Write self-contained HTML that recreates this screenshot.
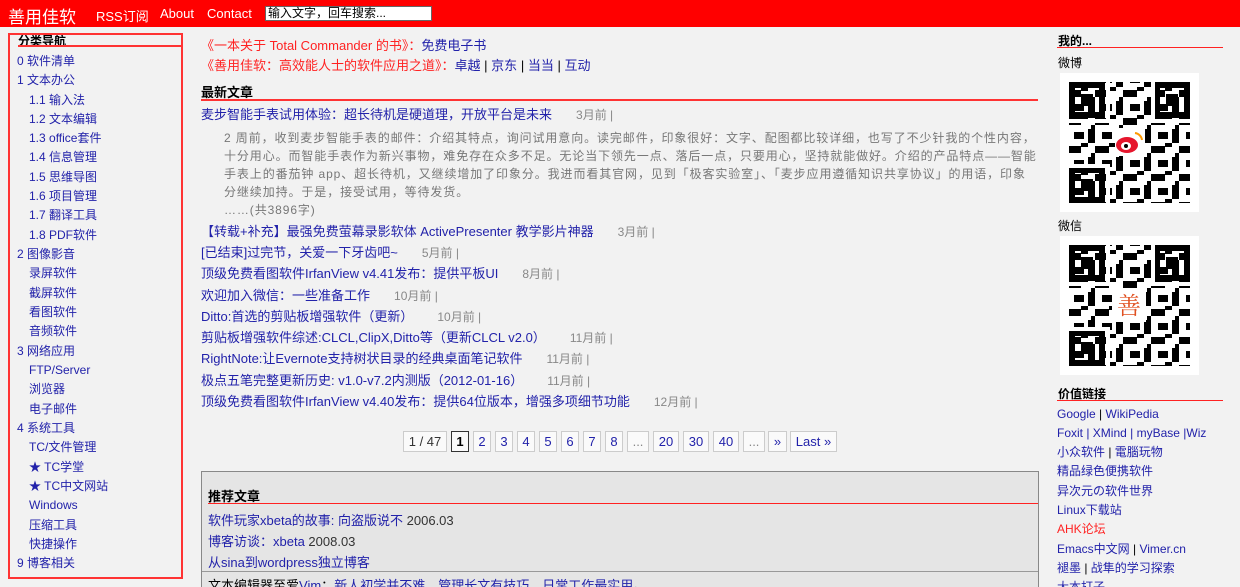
<!DOCTYPE html>
<html style="overflow:hidden;height:587px"><head><meta charset="utf-8"><style>
*{margin:0;padding:0;box-sizing:border-box}
html,body{overflow:hidden}
body{width:1240px;height:587px;background:#f2f2f2;font-family:"Liberation Sans","Noto Sans CJK SC",sans-serif;font-size:12px;color:#333;position:relative}
a{color:#2222aa;text-decoration:none}
.abs{position:absolute;white-space:nowrap}
#hd{position:absolute;left:0;top:0;width:1240px;height:27px;background:#ff0000}
#hd .abs{color:#fff;font-size:13px;top:6px}
#nav{position:absolute;left:8px;top:33px;width:175px;height:546px;border:2px solid #ff3333}
.nt{font-weight:bold;font-size:12px;color:#000;line-height:12px;position:absolute;left:8px;top:0;width:164px;border-bottom:2px solid #ff3333;height:12px;overflow:hidden}
.ni{position:absolute;font-size:12px;line-height:14px;color:#2222aa}
.h{font-weight:bold;font-size:13px;color:#000}
.date{color:#888;font-size:12px}
.pg{position:absolute;top:431px;height:21px;border:1px solid #ccc;background:#fafafa;font-size:13px;line-height:19px;text-align:center;color:#2222aa}
.ex{position:absolute;left:224px;color:#777;font-size:12px;letter-spacing:0.9px;line-height:18px;width:820px}
.art{position:absolute;left:201px;font-size:13px;line-height:16px;white-space:nowrap}
.art .date{margin-left:24px}
.rl{position:absolute;left:1057px;font-size:12px;line-height:14px;white-space:nowrap;color:#2222aa}
.sep{color:#000}
</style></head><body>
<div id="hd">
<div class="abs" style="left:8px;top:3px;font-size:17px">善用佳软</div>
<div class="abs" style="left:96px">RSS订阅</div>
<div class="abs" style="left:160px">About</div>
<div class="abs" style="left:207px">Contact</div>
<div class="abs" style="left:265px;top:6px;width:167px;height:15px;background:#fff;border:1px solid #666;color:#000;font-size:12px;line-height:13px;padding-left:2px">输入文字，回车搜索...</div>
</div>

<div id="nav">
<div class="nt">分类导航</div>
</div>
<div class="ni" style="left:17px;top:54px">0 软件清单</div>
<div class="ni" style="left:17px;top:73px">1 文本办公</div>
<div class="ni" style="left:29px;top:93px">1.1 输入法</div>
<div class="ni" style="left:29px;top:112px">1.2 文本编辑</div>
<div class="ni" style="left:29px;top:131px">1.3 office套件</div>
<div class="ni" style="left:29px;top:150px">1.4 信息管理</div>
<div class="ni" style="left:29px;top:170px">1.5 思维导图</div>
<div class="ni" style="left:29px;top:189px">1.6 项目管理</div>
<div class="ni" style="left:29px;top:208px">1.7 翻译工具</div>
<div class="ni" style="left:29px;top:228px">1.8 PDF软件</div>
<div class="ni" style="left:17px;top:247px">2 图像影音</div>
<div class="ni" style="left:29px;top:266px">录屏软件</div>
<div class="ni" style="left:29px;top:286px">截屏软件</div>
<div class="ni" style="left:29px;top:305px">看图软件</div>
<div class="ni" style="left:29px;top:324px">音频软件</div>
<div class="ni" style="left:17px;top:344px">3 网络应用</div>
<div class="ni" style="left:29px;top:363px">FTP/Server</div>
<div class="ni" style="left:29px;top:382px">浏览器</div>
<div class="ni" style="left:29px;top:402px">电子邮件</div>
<div class="ni" style="left:17px;top:421px">4 系统工具</div>
<div class="ni" style="left:29px;top:440px">TC/文件管理</div>
<div class="ni" style="left:29px;top:460px">★ TC学堂</div>
<div class="ni" style="left:29px;top:479px">★ TC中文网站</div>
<div class="ni" style="left:29px;top:498px">Windows</div>
<div class="ni" style="left:29px;top:518px">压缩工具</div>
<div class="ni" style="left:29px;top:537px">快捷操作</div>
<div class="ni" style="left:17px;top:556px">9 博客相关</div>

<div class="abs" style="left:201px;top:35px;font-size:13px;color:#ff2222">《一本关于 Total Commander 的书》：<a>免费电子书</a></div>
<div class="abs" style="left:201px;top:55px;font-size:13px;color:#ff2222">《善用佳软：高效能人士的软件应用之道》：<a>卓越</a> <span class="sep">|</span> <a>京东</a> <span class="sep">|</span> <a>当当</a> <span class="sep">|</span> <a>互动</a></div>
<div class="abs h" style="left:201px;top:82px">最新文章</div>
<div class="abs" style="left:201px;top:99px;width:837px;height:2px;background:#ff3333"></div>

<div class="art" style="top:107px"><a>麦步智能手表试用体验：超长待机是硬道理，开放平台是未来</a><span class="date">3月前 |</span></div>
<div class="ex" style="top:129px">2 周前，收到麦步智能手表的邮件：介绍其特点，询问试用意向。读完邮件，印象很好：文字、配图都比较详细，也写了不少针我的个性内容，<br>十分用心。而智能手表作为新兴事物，难免存在众多不足。无论当下领先一点、落后一点，只要用心，坚持就能做好。介绍的产品特点——智能<br>手表上的番茄钟 app、超长待机，又继续增加了印象分。我进而看其官网，见到「极客实验室」、「麦步应用遵循知识共享协议」的用语，印象<br>分继续加持。于是，接受试用，等待发货。<br>……(共3896字)</div>
<div class="art" style="top:224px"><a>【转载+补充】最强免费萤幕录影软体 ActivePresenter 教学影片神器</a><span class="date">3月前 |</span></div>
<div class="art" style="top:245px"><a>[已结束]过完节，关爱一下牙齿吧~</a><span class="date">5月前 |</span></div>
<div class="art" style="top:266px"><a>顶级免费看图软件IrfanView v4.41发布：提供平板UI</a><span class="date">8月前 |</span></div>
<div class="art" style="top:288px"><a>欢迎加入微信：一些准备工作</a><span class="date">10月前 |</span></div>
<div class="art" style="top:309px"><a>Ditto:首选的剪贴板增强软件（更新）</a><span class="date">10月前 |</span></div>
<div class="art" style="top:330px"><a>剪贴板增强软件综述:CLCL,ClipX,Ditto等（更新CLCL v2.0）</a><span class="date">11月前 |</span></div>
<div class="art" style="top:351px"><a>RightNote:让Evernote支持树状目录的经典桌面笔记软件</a><span class="date">11月前 |</span></div>
<div class="art" style="top:373px"><a>极点五笔完整更新历史: v1.0-v7.2内测版（2012-01-16）</a><span class="date">11月前 |</span></div>
<div class="art" style="top:394px"><a>顶级免费看图软件IrfanView v4.40发布：提供64位版本，增强多项细节功能</a><span class="date">12月前 |</span></div>

<div class="pg" style="left:403px;width:44px;color:#333">1 / 47</div>
<div class="pg" style="left:451px;width:18px;border:1px solid #333;color:#000;font-weight:bold">1</div>
<div class="pg" style="left:473px;width:18px">2</div>
<div class="pg" style="left:495px;width:18px">3</div>
<div class="pg" style="left:517px;width:18px">4</div>
<div class="pg" style="left:539px;width:18px">5</div>
<div class="pg" style="left:561px;width:18px">6</div>
<div class="pg" style="left:583px;width:18px">7</div>
<div class="pg" style="left:605px;width:18px">8</div>
<div class="pg" style="left:627px;width:22px;color:#888">...</div>
<div class="pg" style="left:653px;width:26px">20</div>
<div class="pg" style="left:683px;width:26px">30</div>
<div class="pg" style="left:713px;width:26px">40</div>
<div class="pg" style="left:743px;width:22px;color:#888">...</div>
<div class="pg" style="left:768px;width:19px">»</div>
<div class="pg" style="left:790px;width:47px">Last »</div>

<div style="position:absolute;left:201px;top:471px;width:838px;height:116px;background:#e5e5e5;border:1px solid #888;border-bottom:none"></div>
<div class="abs h" style="left:208px;top:486px">推荐文章</div>
<div class="abs" style="left:208px;top:503px;width:830px;height:1px;background:#ff2222"></div>
<div class="abs" style="left:208px;top:510px;font-size:13px"><a>软件玩家xbeta的故事: 向盗版说不</a> 2006.03</div>
<div class="abs" style="left:208px;top:531px;font-size:13px"><a>博客访谈：xbeta</a> 2008.03</div>
<div class="abs" style="left:208px;top:552px;font-size:13px"><a>从sina到wordpress独立博客</a></div>
<div class="abs" style="left:202px;top:571px;width:836px;height:1px;background:#999"></div>
<div class="abs" style="left:208px;top:575px;font-size:13px;color:#000">文本编辑器至爱<a>Vim</a>：<a>新人初学并不难</a>，<a>管理长文有技巧</a>，<a>日常工作最实用</a>。</div>

<div class="abs h" style="left:1058px;top:32px;font-size:12px">我的...</div>
<div class="abs" style="left:1057px;top:47px;width:166px;height:1px;background:#ff2222"></div>
<div class="abs" style="left:1058px;top:54px;color:#000">微博</div>
<svg class="abs" style="left:1060px;top:73px" width="139" height="139" viewBox="0 0 139 139">
<defs><pattern id="p" width="28" height="28" patternUnits="userSpaceOnUse"><rect width="28" height="28" fill="#fff"/><rect x="0" y="0" width="7" height="14" fill="#000"/><rect x="14" y="3" width="10" height="7" fill="#000"/><rect x="7" y="17" width="14" height="7" fill="#000"/><rect x="21" y="14" width="7" height="4" fill="#000"/><rect x="3" y="24" width="4" height="4" fill="#000"/></pattern></defs>
<rect width="139" height="139" fill="#fff"/><rect x="9" y="9" width="121" height="121" fill="url(#p)"/>
<g fill="none" stroke="#000" stroke-width="6"><rect x="12" y="12" width="30" height="30"/><rect x="97" y="12" width="30" height="30"/><rect x="12" y="97" width="30" height="30"/></g>
<g fill="#000"><rect x="21" y="21" width="12" height="12"/><rect x="106" y="21" width="12" height="12"/><rect x="21" y="106" width="12" height="12"/></g>
<g fill="#fff"><rect x="5" y="5" width="43" height="4"/><rect x="5" y="46" width="43" height="4"/><rect x="46" y="5" width="4" height="45"/><rect x="91" y="46" width="43" height="4"/><rect x="91" y="5" width="4" height="45"/><rect x="5" y="91" width="45" height="4"/><rect x="46" y="91" width="4" height="43"/></g>
<rect x="55" y="55" width="30" height="28" fill="#fff"/><ellipse cx="67" cy="72" rx="11" ry="8" fill="#e6162d"/><ellipse cx="66" cy="73" rx="5" ry="4" fill="#fff"/><circle cx="66" cy="73" r="2" fill="#000"/><path d="M75 60a8 8 0 0 1 7 7" stroke="#f90" stroke-width="2" fill="none"/>
</svg>
<div class="abs" style="left:1058px;top:217px;color:#000">微信</div>
<svg class="abs" style="left:1060px;top:236px" width="139" height="139" viewBox="0 0 139 139">
<rect width="139" height="139" fill="#fff"/><rect x="9" y="9" width="121" height="121" fill="url(#p)"/>
<g fill="none" stroke="#000" stroke-width="6"><rect x="12" y="12" width="30" height="30"/><rect x="97" y="12" width="30" height="30"/><rect x="12" y="97" width="30" height="30"/></g>
<g fill="#000"><rect x="21" y="21" width="12" height="12"/><rect x="106" y="21" width="12" height="12"/><rect x="21" y="106" width="12" height="12"/></g>
<g fill="#fff"><rect x="5" y="5" width="43" height="4"/><rect x="5" y="46" width="43" height="4"/><rect x="46" y="5" width="4" height="45"/><rect x="91" y="46" width="43" height="4"/><rect x="91" y="5" width="4" height="45"/><rect x="5" y="91" width="45" height="4"/><rect x="46" y="91" width="4" height="43"/></g>
<rect x="52" y="52" width="34" height="34" fill="#fff"/><text x="69" y="78" text-anchor="middle" font-size="24" fill="#e05020" font-family="Noto Serif CJK SC,serif">善</text>
</svg>
<div class="abs h" style="left:1058px;top:385px;font-size:12px">价值链接</div>
<div class="abs" style="left:1057px;top:400px;width:166px;height:1px;background:#ff2222"></div>
<div class="rl" style="top:407px">Google <span class="sep">|</span> WikiPedia</div>
<div class="rl" style="top:426px">Foxit | XMind | myBase |Wiz</div>
<div class="rl" style="top:445px">小众软件 <span class="sep">|</span> 電腦玩物</div>
<div class="rl" style="top:464px">精品绿色便携软件</div>
<div class="rl" style="top:484px">异次元の软件世界</div>
<div class="rl" style="top:503px">Linux下载站</div>
<div class="rl" style="top:522px;color:#ff2222">AHK论坛</div>
<div class="rl" style="top:542px">Emacs中文网 <span class="sep">|</span> Vimer.cn</div>
<div class="rl" style="top:561px">褪墨 <span class="sep">|</span> 战隼的学习探索</div>
<div class="rl" style="top:580px">大本打子</div>
</body></html>
